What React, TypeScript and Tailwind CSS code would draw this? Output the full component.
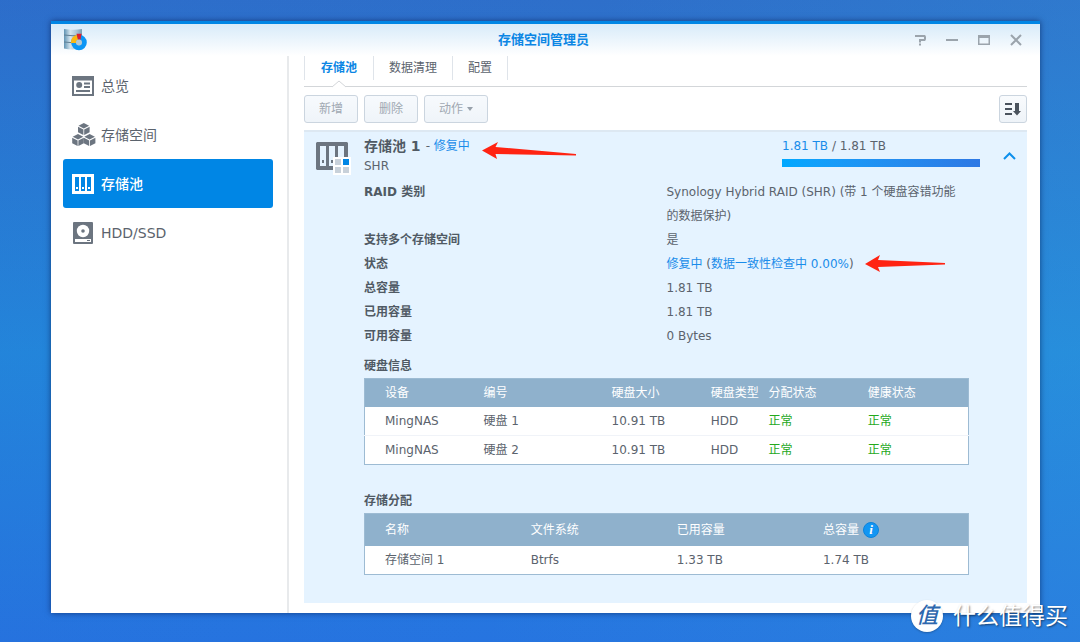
import type { ReactNode } from "react";

const disks = [
  { device: "MingNAS", number: "硬盘 1", size: "10.91 TB", type: "HDD" },
  { device: "MingNAS", number: "硬盘 2", size: "10.91 TB", type: "HDD" },
];

// button style
const buttonStyle = `h-[28px] px-[14px] flex items-center justify-center rounded-[3px] border border-[#cbd5df] bg-linear-to-b from-[#f7fafd] to-[#eff4f9] text-[12px] leading-[20px] text-[#a0a8b2]`;

// table styles
const tableStyle = `w-full table-fixed border-collapse border border-[#9dbbd3] bg-white text-left whitespace-nowrap`;
const cellStyle = `p-0 pl-[20px] font-normal`;

const AppLogo = () => (
  <svg width="24" height="24" viewBox="0 0 24 24">
    <defs>
      <linearGradient id="can" x1="0" x2="1">
        <stop offset="0" stopColor="#5f93b3" />
        <stop offset="0.35" stopColor="#d5e5ee" />
        <stop offset="0.7" stopColor="#a9c5d6" />
        <stop offset="1" stopColor="#7b9db2" />
      </linearGradient>
    </defs>
    <path d="M0 1Q9 2.500 18 1V20Q9 22.500 0 20.500Z" fill="url(#can)" />
    <path d="M0 7Q9 8.500 18 7M0 14Q9 15.500 18 14" fill="none" stroke="#5f7f94" strokeWidth="1" />
    <circle cx="15" cy="14.500" r="5.300" fill="none" stroke="#0c96f5" strokeWidth="5" />
    <path d="M7 15A8 8 0 0 1 12.700 6.800L14.200 11.700A3 3 0 0 0 12 15Z" fill="#fcb813" />
    <path d="M12.500 5.800H17.500L16.500 11.800A3 3 0 0 0 14 11.700Z" fill="#dd1f2f" />
    <circle cx="15" cy="14.500" r="3" fill="#b4c8d3" />
  </svg>
);

const OverviewIcon = () => (
  <svg width="22" height="20" viewBox="0 0 22 20">
    <path fill="#6c7580" fillRule="evenodd" d="M0 0H22V20H0ZM2 4.500V18H20V4.500Z" />
    <circle cx="7.200" cy="9" r="3" fill="#6c7580" />
    <path d="M12 7.500H18M12 11H18M4 15H18" stroke="#6c7580" strokeWidth="2" />
  </svg>
);

const Cube = () => (
  <>
    <path d="M6 0L11.300 2.700L6 5.400L0.700 2.700Z" />
    <path d="M0.200 3.700L5.600 6.400V12L0.200 9.300Z" />
    <path d="M11.800 3.700L6.400 6.400V12L11.800 9.300Z" />
  </>
);

const VolumeIcon = () => (
  <svg width="24" height="24" viewBox="0 0 24 24" fill="#6c7580" className="-mr-[2px]">
    <g transform="translate(5.800 0)"><Cube /></g>
    <g transform="translate(0 11)"><Cube /></g>
    <g transform="translate(11.600 11)"><Cube /></g>
  </svg>
);

const PoolIcon = () => (
  <svg width="22" height="20" viewBox="0 0 22 20">
    <path fill="#fff" fillRule="evenodd" d="M0 0H22V20H0ZM3 3V17H7V3ZM9 3V17H13V3ZM15 3V17H19V3Z" />
    <path d="M4 13H6V15H4ZM10 13H12V15H10ZM16 13H18V15H16Z" fill="#fff" />
  </svg>
);

const DriveIcon = () => (
  <svg width="22" height="22" viewBox="0 0 22 22">
    <rect x="1" width="20" height="22" rx="1" fill="#6c7580" />
    <circle cx="11" cy="9" r="6.200" fill="#fff" />
    <circle cx="11" cy="9" r="1.800" fill="#6c7580" />
    <path d="M3 17H19V20H3Z" fill="#fff" />
    <path d="M15 18H18V19H15Z" fill="#6c7580" />
  </svg>
);

const PoolStatusIcon = () => (
  <svg width="35" height="34" viewBox="0 0 35 34">
    <path fill="#6c7580" fillRule="evenodd" d="M1 0H31L32 1V27L31 28H1L0 27V1ZM4 4V24H10V4ZM13 4V24H19V4ZM22 4V24H28V4Z" />
    <path d="M6 18H8V21H6ZM15 18H17V21H15Z" fill="#6c7580" />
    <path d="M17 15H35V33H17Z" fill="#fff" />
    <path d="M19 17H25V23H19ZM19 25H25V31H19ZM27 25H33V31H27Z" fill="#c8d1da" />
    <path d="M27 17H33V23H27Z" fill="#0086e5" />
  </svg>
);

const menu: { label: string; icon: ReactNode; active?: boolean }[] = [
  { label: "总览", icon: <OverviewIcon /> },
  { label: "存储空间", icon: <VolumeIcon /> },
  { label: "存储池", icon: <PoolIcon />, active: true },
  { label: "HDD/SSD", icon: <DriveIcon /> },
];

const Row = ({ label, children }: { label: string; children: ReactNode }) => (
  <div className="grid grid-cols-2">
    <dt className="font-bold text-[#505a64]">{label}</dt>
    <dd className="pr-[8px]">{children}</dd>
  </div>
);

export default function App() {
  return (
    <div className="relative min-h-screen flex bg-[linear-gradient(100deg,#2463cd22,transparent_50%,#359fdb44),linear-gradient(to_bottom,#2e6fca,#2389dc_55%,#2674e0)] pt-[21px] pb-[29px] pl-[51px] pr-[40px] font-['DejaVu_Sans','Noto_Sans_CJK_SC',sans-serif] text-[12px] leading-[20px] text-[#5b636d]">
      <div className="flex-1 flex flex-col bg-white border-t-3 border-[#0086e5] shadow-[0_0_6px_rgba(0,20,70,0.6)]">
        {/* title bar */}
        <header className="h-[32px] grid grid-cols-[1fr_auto_1fr] items-center pl-[13px] pr-[17px] bg-linear-to-b from-[#d8ebf9] to-white">
          <AppLogo />
          <h1 className="text-[13px] font-bold text-[#0b86e4]">存储空间管理员</h1>
          <div className="flex justify-end gap-[18px]">
            <button aria-label="帮助">
              <svg width="14" height="12" viewBox="0 0 14 12" fill="none" stroke="#9ba4ac" strokeWidth="2">
                <path d="M2 2H11.500L12 3V5L11.500 6H7V8.500M7 9.500V11.500" />
              </svg>
            </button>
            <button aria-label="最小化">
              <svg width="14" height="12" viewBox="0 0 14 12">
                <path d="M1 5H13V7H1Z" fill="#9ba4ac" />
              </svg>
            </button>
            <button aria-label="最大化">
              <svg width="14" height="12" viewBox="0 0 14 12">
                <path d="M1 1H13V11H1ZM2.500 4V9.500H11.500V4Z" fill="#9ba4ac" fillRule="evenodd" />
              </svg>
            </button>
            <button aria-label="关闭">
              <svg width="14" height="12" viewBox="0 0 14 12" fill="none" stroke="#9ba4ac" strokeWidth="2">
                <path d="M2 1L12 11M12 1L2 11" />
              </svg>
            </button>
          </div>
        </header>

        <div className="flex-1 flex">
          {/* sidebar */}
          <nav className="w-[238px] shrink-0 pt-[5px] pl-[12px] pr-[14px] border-r-2 border-[#e8eaec]">
            {menu.map((item) => (
              <button
                key={item.label}
                className={
                  item.active
                    ? "w-full h-[49px] flex items-center gap-[7px] pl-[9px] rounded-[3px] bg-[#0086e5] text-[14px] font-medium text-white"
                    : "w-full h-[49px] flex items-center gap-[7px] pl-[9px] rounded-[3px] text-[14px]"
                }
              >
                {item.icon}
                {item.label}
              </button>
            ))}
          </nav>

          <main className="flex-1 flex flex-col pl-[15px] pr-[13px] pb-[10px]">
            {/* tabs */}
            <div className="flex pb-[6px] border-b border-[#d3d6d9]">
              <button className="relative h-[24px] px-[16px] border-l border-[#dfe4ea] font-bold text-[#0b86e4]">
                存储池
                <svg width="14" height="8" viewBox="0 0 14 8" className="absolute left-[27px] top-[24px]">
                  <path d="M0 7L7 1L14 7V8H0Z" fill="#fff" />
                  <path d="M0 7L7 1L14 7" fill="none" stroke="#d3d6d9" />
                </svg>
              </button>
              <button className="h-[24px] px-[15px] border-l border-[#dfe4ea]">数据清理</button>
              <button className="h-[24px] px-[15px] border-x border-[#dfe4ea]">配置</button>
            </div>

            {/* toolbar */}
            <div className="mt-[8px] flex items-center gap-[6px]">
              <button className={buttonStyle}>新增</button>
              <button className={buttonStyle}>删除</button>
              <button className={buttonStyle}>
                动作
                <svg width="10" height="4" viewBox="0 0 10 4">
                  <path d="M4 0H10L7 4Z" fill="#98a1ab" />
                </svg>
              </button>
              <button
                aria-label="排序"
                className="ml-auto size-[28px] px-0 flex items-center justify-center rounded-[3px] border border-[#cbd5df] bg-linear-to-b from-[#f9fbfd] to-[#eef3f8]"
              >
                <svg width="16" height="13" viewBox="0 0 16 13" fill="#4b535d">
                  <path d="M0 0H7V2H0ZM0 5H7V7H0ZM0 10H7V12H0Z" />
                  <path d="M10 0H14V8H16L12 12.500L8 8H10Z" />
                </svg>
              </button>
            </div>

            <section className="mt-[7px] flex-1 border-t-2 border-[#dde8f2] bg-[#e5f3ff] pb-[28px]">
              {/* pool header */}
              <div className="flex pt-[4px]">
                <div className="w-[60px] shrink-0 pl-[12px] pt-[6px]">
                  <PoolStatusIcon />
                </div>
                <div className="flex-1">
                  <div className="flex items-center">
                    <h2 className="text-[14px] font-bold text-[#505a64]">存储池 1</h2>
                    <span className="ml-[5px]">
                      - <span className="text-[#198cea]">修复中</span>
                    </span>
                    <svg width="94" height="18" viewBox="0 0 94 18" className="ml-[12px] mt-[6px] -mb-[4px]">
                      <path d="M0 8.500L16 0L13.500 5L94 12V13.500L13.500 12L15 17Z" fill="#ff2312" />
                    </svg>
                  </div>
                  <p>SHR</p>
                </div>
                <div className="w-[198px]">
                  <p>
                    <span className="text-[#198cea]">1.81 TB</span> / 1.81 TB
                  </p>
                  <div className="mt-[3px] h-[8px] bg-linear-to-r from-[#00a8ff] to-[#2d78e4]" />
                </div>
                <button aria-label="收起" className="self-center mr-[11px] ml-[23px]">
                  <svg width="13" height="8" viewBox="0 0 13 8" fill="none" stroke="#0d8fec" strokeWidth="2">
                    <path d="M1 7L6.500 1.500L12 7" />
                  </svg>
                </button>
              </div>

              <div className="pl-[60px] pr-[58px]">
                <dl className="mt-[4px] leading-[24px]">
                  <Row label="RAID 类别">Synology Hybrid RAID (SHR) (带 1 个硬盘容错功能的数据保护)</Row>
                  <Row label="支持多个存储空间">是</Row>
                  <Row label="状态">
                    <div className="flex items-center">
                      <span>
                        <span className="text-[#198cea]">修复中</span> (
                        <span className="text-[#198cea]">数据一致性检查中 0.00%</span>)
                      </span>
                      <svg width="80" height="18" viewBox="0 0 80 18" className="ml-[11px]">
                        <path d="M0 9L15 0L13 5L80 8V9.500L13 12L15 17Z" fill="#ff2312" />
                      </svg>
                    </div>
                  </Row>
                  <Row label="总容量">1.81 TB</Row>
                  <Row label="已用容量">1.81 TB</Row>
                  <Row label="可用容量">0 Bytes</Row>
                </dl>

                {/* disks */}
                <h3 className="mt-[8px] mb-[2px] font-bold text-[#505a64]">硬盘信息</h3>
                <table className={tableStyle}>
                  <thead className="bg-[#8fb1cc] text-white">
                    <tr className="h-[28px]">
                      <th className={`${cellStyle} w-[16.4%]`}>设备</th>
                      <th className={`${cellStyle} w-[21.2%]`}>编号</th>
                      <th className={`${cellStyle} w-[16.4%]`}>硬盘大小</th>
                      <th className={`${cellStyle} w-[9.6%]`}>硬盘类型</th>
                      <th className={`${cellStyle} w-[16.4%]`}>分配状态</th>
                      <th className={cellStyle}>健康状态</th>
                    </tr>
                  </thead>
                  <tbody>
                    {disks.map((disk) => (
                      <tr key={disk.number} className="h-[29px] border-b border-[#f0f3f8] last:border-[#9dbbd3]">
                        <td className={cellStyle}>{disk.device}</td>
                        <td className={cellStyle}>{disk.number}</td>
                        <td className={cellStyle}>{disk.size}</td>
                        <td className={cellStyle}>{disk.type}</td>
                        <td className={`${cellStyle} text-[#24a81c]`}>正常</td>
                        <td className={`${cellStyle} text-[#24a81c]`}>正常</td>
                      </tr>
                    ))}
                  </tbody>
                </table>

                {/* allocation */}
                <h3 className="mt-[26px] mb-[2px] font-bold text-[#505a64]">存储分配</h3>
                <table className={tableStyle}>
                  <thead className="bg-[#8fb1cc] text-white">
                    <tr className="h-[32px]">
                      <th className={`${cellStyle} w-[24.2%]`}>名称</th>
                      <th className={`${cellStyle} w-[24.2%]`}>文件系统</th>
                      <th className={`${cellStyle} w-[24.2%]`}>已用容量</th>
                      <th className={cellStyle}>
                        <div className="flex items-center gap-[4px]">
                          总容量
                          <span className="size-[16px] flex items-center justify-center rounded-full bg-[#1296f3] border border-[#0b83dc] font-['Liberation_Serif',serif] text-[13px] leading-[13px] font-bold italic">
                            i
                          </span>
                        </div>
                      </th>
                    </tr>
                  </thead>
                  <tbody>
                    <tr className="h-[29px]">
                      <td className={cellStyle}>存储空间 1</td>
                      <td className={cellStyle}>Btrfs</td>
                      <td className={cellStyle}>1.33 TB</td>
                      <td className={cellStyle}>1.74 TB</td>
                    </tr>
                  </tbody>
                </table>
              </div>
            </section>
          </main>
        </div>
      </div>

      {/* watermark */}
      <div className="absolute right-[12px] bottom-[10px] flex items-center gap-[10px] text-white">
        <span className="size-[32px] flex items-center justify-center rounded-full bg-white text-[22px] leading-[32px] font-medium italic text-[#2e68ae] shadow-[0_1px_2px_rgba(0,0,0,0.25)]">
          值
        </span>
        <span className="text-[23px] leading-[32px] [text-shadow:1px_1px_2px_rgba(0,0,0,0.5)]">什么值得买</span>
      </div>
    </div>
  );
}
